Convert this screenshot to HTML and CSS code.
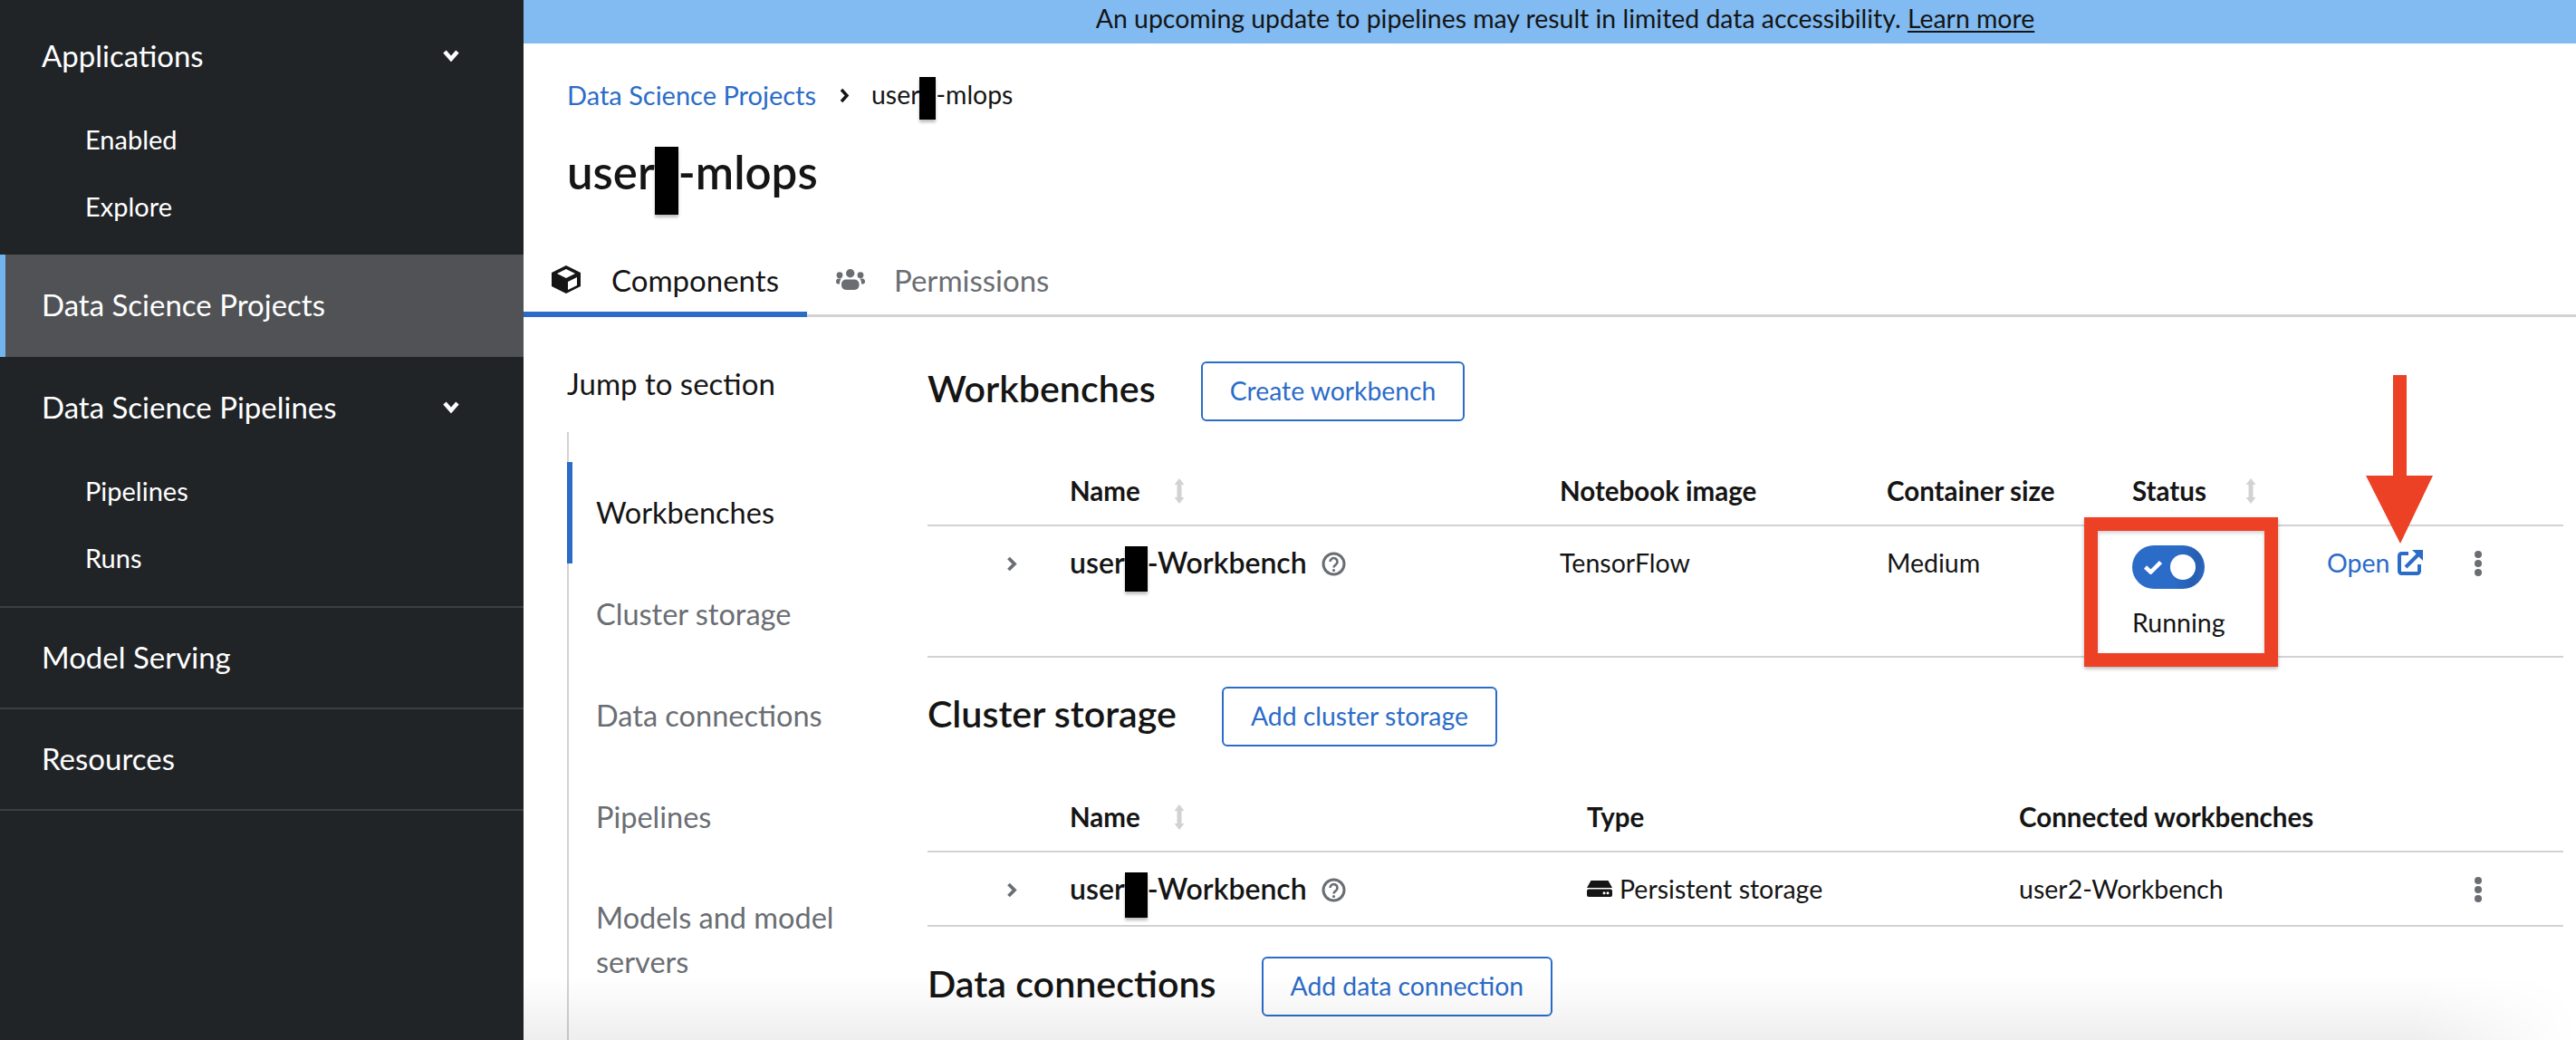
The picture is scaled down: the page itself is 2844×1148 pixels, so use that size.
FILE: index.html
```html
<!DOCTYPE html>
<html lang="en">
<head>
<meta charset="utf-8">
<title>user2-mlops</title>
<link rel="stylesheet" href="styles.css">
</head>
<body>
<div class="app">
  <nav class="sidebar">
    <div class="nav-group nav-first">
      <div class="nav-head"><span>Applications</span><svg class="nav-chev" viewBox="0 0 20 14"><path d="M3 3l7 8 7-8" fill="none" stroke="#fff" stroke-width="4.500"/></svg></div>
      <div class="nav-sub">Enabled</div>
      <div class="nav-sub">Explore</div>
    </div>
    <div class="nav-item nav-active">Data Science Projects</div>
    <div class="nav-group nav-sep">
      <div class="nav-head"><span>Data Science Pipelines</span><svg class="nav-chev" viewBox="0 0 20 14"><path d="M3 3l7 8 7-8" fill="none" stroke="#fff" stroke-width="4.500"/></svg></div>
      <div class="nav-sub">Pipelines</div>
      <div class="nav-sub">Runs</div>
    </div>
    <div class="nav-item nav-sep">Model Serving</div>
    <div class="nav-item nav-sep">Resources</div>
  </nav>
  <main class="main">
    <div class="banner"><span>An upcoming update to pipelines may result in limited data accessibility. <u>Learn more</u></span></div>
    <div class="crumbs">
      <a class="crumb-link">Data Science Projects</a>
      <svg class="crumb-chev" viewBox="0 0 12 17"><path d="M3 2l6 6.5-6 6.5" fill="none" stroke="#151515" stroke-width="3.4"/></svg>
      <span class="crumb-now">user<span class="redact redact-crumb">2</span>-mlops</span>
    </div>
    <h1 class="title">user<span class="redact redact-title">2</span>-mlops</h1>
    <div class="tabs">
      <div class="tab tab-on">
        <svg class="tab-cube" viewBox="0 0 32 31"><path d="M16 0l16 8v15l-16 8-16-8V8z" fill="#151515"/><path d="M16 4l10 5-10 5-10-5z" fill="#fff"/><path d="M18 18l10-5v9l-10 5z" fill="#fff"/></svg>
        <span class="tab-label">Components</span>
      </div>
      <div class="tab tab-off">
        <svg class="tab-users" viewBox="0 0 32 23" fill="#6a6e73"><circle cx="15.7" cy="4.7" r="4.7"/><circle cx="4" cy="6.7" r="3.4"/><circle cx="27" cy="6.7" r="3.4"/><rect x="6" y="11.5" width="19.5" height="11.5" rx="5"/><path d="M0 14c0-2 1-3.5 3-3.5h3c-1 1-2 2.500-2 6H2c-1 0-2-1-2-2.500zM32 14c0-2-1-3.500-3-3.500h-3c1 1 2 2.500 2 6h2c1 0 2-1 2-2.500z"/></svg>
        <span class="tab-label">Permissions</span>
      </div>
    </div>
    <div class="body">
      <aside class="jump">
        <div class="jump-title">Jump to section</div>
        <ul class="jump-list">
          <li class="jump-item jump-on">Workbenches</li>
          <li class="jump-item">Cluster storage</li>
          <li class="jump-item">Data connections</li>
          <li class="jump-item">Pipelines</li>
          <li class="jump-item jump-wrap">Models and model servers</li>
        </ul>
      </aside>
      <div class="sections">
        <section class="sec sec-work">
          <div class="sec-head"><h2 class="sec-title">Workbenches</h2><button class="btn">Create workbench</button></div>
          <div class="table t-work t-head">
            <div></div>
            <div class="th">Name<svg class="sort" viewBox="0 0 12 28"><path d="M6 0l5.500 7H8.500v14h3L6 28 .5 21h3V7h-3z" fill="#d2d2d2"/></svg></div>
            <div class="th">Notebook image</div>
            <div class="th">Container size</div>
            <div class="th">Status<svg class="sort sort-wide" viewBox="0 0 12 28"><path d="M6 0l5.500 7H8.500v14h3L6 28 .5 21h3V7h-3z" fill="#d2d2d2"/></svg></div>
            <div></div><div></div>
          </div>
          <div class="table t-work t-row t-row-tall">
            <div class="td td-exp"><svg class="exp" viewBox="0 0 12 17"><path d="M2.500 2l6.500 6.500-6.500 6.500" fill="none" stroke="#6a6e73" stroke-width="3.800"/></svg></div>
            <div class="td"><span class="wb-name">user<span class="redact redact-row">2</span>-Workbench</span><svg class="help" viewBox="0 0 27 27"><circle cx="13.500" cy="13.500" r="11.500" fill="none" stroke="#6a6e73" stroke-width="3"/><path d="M9.500 11a4 4 0 1 1 6.300 3.300c-1.500 1-2.300 1.500-2.300 3.200" fill="none" stroke="#6a6e73" stroke-width="2.600"/><circle cx="13.500" cy="20.500" r="1.600" fill="#6a6e73"/></svg></div>
            <div class="td td-text">TensorFlow</div>
            <div class="td td-text">Medium</div>
            <div class="td status">
              <span class="toggle"><svg class="check" viewBox="0 0 20 16"><path d="M1.500 8l6 5.500L18.500 2.500" fill="none" stroke="#fff" stroke-width="4.500"/></svg><span class="knob"></span></span>
              <span class="status-label">Running</span>
            </div>
            <div class="td"><a class="open">Open<svg class="ext" viewBox="0 0 28 28"><path d="M12 4H4.500A2.500 2.500 0 0 0 2 6.500v17A2.500 2.500 0 0 0 4.500 26h17a2.500 2.500 0 0 0 2.500-2.500V16" fill="none" stroke="#2b6cc8" stroke-width="4"/><path d="M9 19L23 5" stroke="#2b6cc8" stroke-width="4" fill="none"/><path d="M16 0h12v12z" fill="#2b6cc8"/></svg></a></div>
            <div class="td td-kebab"><svg class="kebab" viewBox="0 0 8 28" fill="#6a6e73"><circle cx="4" cy="4" r="4"/><circle cx="4" cy="14" r="4"/><circle cx="4" cy="24" r="4"/></svg></div>
          </div>
        </section>
        <section class="sec">
          <div class="sec-head"><h2 class="sec-title">Cluster storage</h2><button class="btn">Add cluster storage</button></div>
          <div class="table t-store t-head">
            <div></div>
            <div class="th">Name<svg class="sort" viewBox="0 0 12 28"><path d="M6 0l5.500 7H8.500v14h3L6 28 .5 21h3V7h-3z" fill="#d2d2d2"/></svg></div>
            <div class="th">Type</div>
            <div class="th">Connected workbenches</div>
            <div></div>
          </div>
          <div class="table t-store t-row">
            <div class="td td-exp"><svg class="exp" viewBox="0 0 12 17"><path d="M2.500 2l6.500 6.500-6.500 6.500" fill="none" stroke="#6a6e73" stroke-width="3.800"/></svg></div>
            <div class="td"><span class="wb-name">user<span class="redact redact-row">2</span>-Workbench</span><svg class="help" viewBox="0 0 27 27"><circle cx="13.500" cy="13.500" r="11.500" fill="none" stroke="#6a6e73" stroke-width="3"/><path d="M9.500 11a4 4 0 1 1 6.300 3.300c-1.500 1-2.300 1.500-2.300 3.200" fill="none" stroke="#6a6e73" stroke-width="2.600"/><circle cx="13.500" cy="20.500" r="1.600" fill="#6a6e73"/></svg></div>
            <div class="td td-text"><svg class="disk" viewBox="0 0 28 18"><path d="M4.500 0h19L28 8H0z" fill="#151515"/><rect y="9.500" width="28" height="8.500" rx="2" fill="#151515"/><circle cx="19" cy="13.700" r="1.500" fill="#fff"/><circle cx="23" cy="13.700" r="1.500" fill="#fff"/></svg>Persistent storage</div>
            <div class="td td-text">user2-Workbench</div>
            <div class="td td-kebab"><svg class="kebab" viewBox="0 0 8 28" fill="#6a6e73"><circle cx="4" cy="4" r="4"/><circle cx="4" cy="14" r="4"/><circle cx="4" cy="24" r="4"/></svg></div>
          </div>
        </section>
        <section class="sec">
          <div class="sec-head"><h2 class="sec-title">Data connections</h2><button class="btn">Add data connection</button></div>
        </section>
      </div>
    </div>
    <div class="callout-box"></div>
    <svg class="callout-arrow" viewBox="0 0 74 186"><path d="M30 0h15v111h29L38 186 0 111h30z" fill="#ec4125"/></svg>
    <div class="fade"></div>
  </main>
</div>
</body>
</html>
```

FILE: styles.css
```css
* { box-sizing: border-box; }
html, body { margin: 0; padding: 0; height: 100%; overflow: hidden; }
body { font-family: "Lato", "Liberation Sans", sans-serif; color: #151515; background: #fff; }
.app { display: flex; height: 1148px; overflow: hidden; }

.sidebar { width: 578px; flex: none; background: #212427; color: #fff; font-size: 33px; }
.nav-first { padding-top: 6px; }
.nav-group { padding-bottom: 15px; }
.nav-head { height: 112px; padding: 0 46px 3px; display: flex; align-items: center; justify-content: space-between; }
.nav-chev { width: 20px; height: 14px; margin-right: 24px; margin-top: 1px; }
.nav-sub { height: 74px; padding: 0 0 3px 94px; display: flex; align-items: center; font-size: 29px; }
.nav-item { height: 112px; padding: 0 0 3px 46px; display: flex; align-items: center; }
.nav-active { height: 113px; background: #505255; border-left: 6px solid #73b4ee; padding-left: 40px; }
.nav-sep { border-bottom: 2px solid #3c3f42; }

.main { flex: 1; min-width: 0; position: relative; display: flex; flex-direction: column; overflow: hidden; }
.banner { height: 48px; flex: none; background: #81bbf2; padding: 0 0 8px 34px; display: flex; align-items: center; justify-content: center; font-size: 28.4px; }
.banner u { text-underline-offset: 3px; }
.crumbs { margin: 37px 0 0 48px; height: 40px; display: flex; align-items: center; font-size: 29px; flex: none; }
.crumb-link { color: #2b6cc8; padding-bottom: 2px; }
.crumb-chev { width: 12px; height: 17px; margin: 0 24px 0 25px; }
.crumb-now { display: flex; align-items: center; font-size: 28.4px; padding-bottom: 2px; }
.title { margin: 39px 0 0 48px; height: 60px; display: flex; align-items: center; font-size: 51px; line-height: 60px; font-weight: 600; flex: none; padding-bottom: 8px; }
.redact { display: block; flex: none; background: #000; color: #000; box-shadow: 0 3px 3px rgba(0,0,0,.25); overflow: hidden; }
.redact-crumb { width: 18px; height: 47px; font-size: 10px; margin-top: 8px; }
.redact-title { width: 26px; height: 75px; font-size: 10px; margin-top: 18px; }
.redact-row { width: 25px; height: 50px; font-size: 10px; margin-top: 14px; }

.tabs { margin-top: 48px; height: 78px; flex: none; display: flex; border-bottom: 3px solid #d2d2d2; font-size: 33px; }
.tab { display: flex; align-items: center; height: 78px; }
.tab-label { padding-top: 2px; }
.tab-on { width: 313px; padding-left: 31px; border-bottom: 6px solid #2b6cc8; }
.tab-off { padding-left: 32px; color: #6a6e73; padding-bottom: 6px; }
.tab-cube { width: 32px; height: 31px; margin-right: 34px; }
.tab-users { width: 32px; height: 23px; margin-right: 32px; }

.body { flex: 1; min-height: 0; display: flex; }
.jump { width: 446px; flex: none; padding: 49px 0 0 48px; display: flex; flex-direction: column; }
.jump-title { font-size: 33px; line-height: 48px; padding-bottom: 2px; margin-bottom: -2px; }
.jump-list { list-style: none; margin: 30px 0 0; padding: 33px 0 0; border-left: 2px solid #d2d2d2; flex: 1; color: #6a6e73; font-size: 32.5px; }
.jump-item { height: 112px; display: flex; align-items: center; margin-left: -2px; padding: 0 0 2px 32px; }
.jump-on { color: #151515; border-left: 6px solid #2b6cc8; padding-left: 26px; }
.jump-wrap { height: 160px; line-height: 49px; width: 340px; }

.sections { flex: 1; min-width: 0; padding: 49px 14px 0 0; }
.sec-head { display: flex; align-items: center; height: 66px; }
.sec-title { margin: 0 50px 8px 0; font-size: 41.2px; font-weight: 600; line-height: 50px; }
.btn { height: 66px; padding: 0 30px 3px; background: #fff; border: 2.500px solid #2b6cc8; border-radius: 6px; color: #2b6cc8; font: inherit; font-size: 28.3px; }

.table { display: grid; }
.t-work { grid-template-columns: 157px 541px 361px 271px 215px 147px 40px; }
.t-store { grid-template-columns: 157px 571px 477px 487px 40px; }
.t-head { margin-top: 41px; height: 75px; border-bottom: 2px solid #d2d2d2; align-items: center; }
.sec + .sec .t-head { margin-top: 42px; }
.th { display: flex; align-items: center; font-size: 29.5px; font-weight: 700; padding-bottom: 3px; }
.sort { width: 12px; height: 28px; margin-left: 37px; margin-top: 1px; }
.sort-wide { margin-left: 43px; }
.t-row { height: 82px; padding-top: 21px; border-bottom: 2px solid #d2d2d2; }
.t-row-tall { height: 145px; }
.sec + .sec { margin-top: 32px; }
.sec:last-child { margin-top: 33px; }
.td { display: flex; align-items: center; height: 40px; }
.td-text { font-size: 28.5px; padding-bottom: 2px; }
.td-exp { padding-left: 87px; }
.exp { width: 12px; height: 17px; }
.wb-name { display: flex; align-items: center; font-size: 32px; font-weight: 600; height: 40px; padding-bottom: 3px; }
.help { width: 27px; height: 27px; margin-left: 16px; }
.status { display: block; height: auto; }
.toggle { width: 80px; height: 48px; border-radius: 24px; background: linear-gradient(100deg, #2b6cc8 60%, #265eb0 85%, #2b6cc8); display: flex; align-items: center; padding-left: 13px; }
.check { width: 20px; height: 16px; }
.knob { width: 28px; height: 28px; border-radius: 50%; background: #fff; margin-left: 9px; }
.status-label { display: block; margin-top: 17px; font-size: 28.5px; line-height: 40px; }
.open { display: flex; align-items: center; color: #2b6cc8; font-size: 28.5px; padding-bottom: 2px; }
.ext { width: 28px; height: 28px; margin-left: 9px; }
.td-kebab { justify-content: center; }
.kebab { width: 8px; height: 28px; }
.disk { width: 28px; height: 18px; margin-right: 8px; }

.callout-box { position: absolute; left: 1723px; top: 571px; width: 214px; height: 165px; border: 15px solid #ec4125; box-shadow: 0 2px 4px rgba(0,0,0,.3), inset 0 2px 4px rgba(0,0,0,.2); }
.callout-arrow { position: absolute; left: 2034px; top: 414px; width: 74px; height: 186px; }
.fade { position: absolute; left: 0; right: 0; bottom: 0; height: 70px; pointer-events: none; background: linear-gradient(rgba(0,0,0,0), rgba(0,0,0,.065)); -webkit-mask-image: linear-gradient(to right, #000 92%, transparent); mask-image: linear-gradient(to right, #000 92%, transparent); }
```
